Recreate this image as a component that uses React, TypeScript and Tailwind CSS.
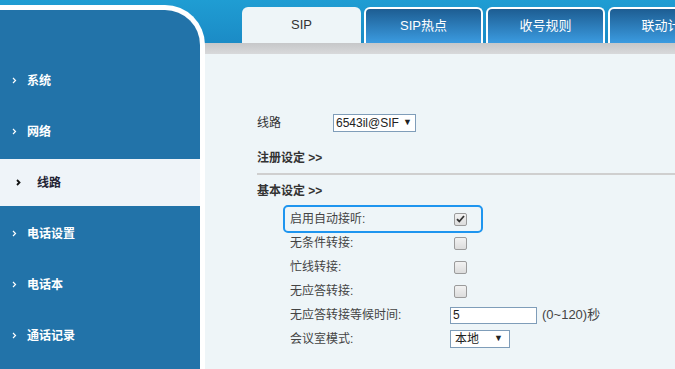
import React from "react";

const font = { fontFamily: '"Liberation Sans", "Noto Sans CJK SC", sans-serif' };

const menu = [
  { id: "system", label: "系统" },
  { id: "network", label: "网络" },
  { id: "line", label: "线路", active: true },
  { id: "phone", label: "电话设置" },
  { id: "book", label: "电话本" },
  { id: "log", label: "通话记录" },
];

const tabs = [
  { id: "sip", label: "SIP", active: true },
  { id: "hotspot", label: "SIP热点" },
  { id: "dial", label: "收号规则" },
  { id: "link", label: "联动计划" },
];

function Chevron({ active }: { active?: boolean }) {
  return (
    <svg width="5" height="7" viewBox="0 0 5 7" className="shrink-0">
      <polyline
        points="1,1 3.5,3.5 1,6"
        fill="none"
        stroke={active ? "#111" : "#fff"}
        strokeWidth={active ? 1.8 : 1.2}
      />
    </svg>
  );
}

function Checkbox({ checked }: { checked?: boolean }) {
  return (
    <div className="ml-[4px] flex h-[13px] w-[13px] items-center justify-center rounded-[2px] border border-[#9b9b9b] bg-[linear-gradient(to_bottom,#f2f2f2,#dcdcdc)]">
      {checked && (
        <svg width="9" height="8" viewBox="0 0 9 8">
          <path d="M1 4.2 L3.3 6.5 L8 1" fill="none" stroke="#333" strokeWidth="1.8" />
        </svg>
      )}
    </div>
  );
}

function Row({ label, children, boxed }: { label: string; children: React.ReactNode; boxed?: boolean }) {
  return (
    <div
      className={
        "flex h-[24px] items-center " +
        (boxed ? "w-[196px] rounded-[3px] outline-2 outline-[#1e95ef]" : "")
      }
    >
      <span className="w-[165px] pl-[5px] text-[12px] text-[#444]">{label}</span>
      {children}
    </div>
  );
}

export default function App() {
  return (
    <div
      style={font}
      className="flex h-[369px] w-[675px] overflow-hidden bg-[linear-gradient(to_bottom,#1f9dd3_0px,#1b8bc6_43px,#c6c7c9_43px,#d8d9db_54px,#eef5f8_54px)]"
    >
      {/* sidebar */}
      <div className="flex w-[205px] shrink-0 flex-col pt-[5px]">
        <div className="flex flex-1 flex-col gap-[4px] rounded-tr-[40px] border-t-[5px] border-r-[5px] border-white bg-[#2273a9] pt-[47px]">
          {menu.map((m) =>
            m.active ? (
              <div key={m.id} className="flex h-[47px] items-center bg-[#eff4f9] pl-[16px]">
                <Chevron active />
                <span className="ml-[16px] text-[12px] font-bold text-[#223]">{m.label}</span>
              </div>
            ) : (
              <div key={m.id} className="flex h-[47px] items-center pl-[12px]">
                <Chevron />
                <span className="ml-[10px] text-[12px] font-bold text-white">{m.label}</span>
              </div>
            )
          )}
        </div>
      </div>

      {/* main */}
      <div className="flex min-w-0 flex-1 flex-col">
        <div className="flex h-[43px] items-end gap-[3px] pl-[37px]">
          {tabs.map((t) => (
            <div
              key={t.id}
              className={
                "flex h-[36px] w-[119px] shrink-0 items-center justify-center overflow-hidden whitespace-nowrap rounded-t-[6px] text-[13px] " +
                (t.active
                  ? "bg-[#eef5f8] text-[#333]"
                  : "border-2 border-b-0 border-white bg-[linear-gradient(to_bottom,#1d5d92,#3b9be0)] text-white")
              }
            >
              {t.label}
            </div>
          ))}
        </div>
        <div className="h-[11px]" />

        <div className="flex flex-col pl-[52px]">
          <div className="mt-[60px] flex h-[18px] items-center">
            <span className="w-[76px] text-[12px] text-[#333]">线路</span>
            <div className="flex h-[18px] w-[83px] items-center gap-[4px] whitespace-nowrap border border-[#7f9db9] bg-white pl-[2px] text-[12px] text-[#222]">
              <span>6543il@SIF</span>
              <span className="shrink-0 text-[9px]">▼</span>
            </div>
          </div>

          <div className="mt-[18px] h-[16px] text-[12px] font-bold leading-[16px] text-[#333]">注册设定 &gt;&gt;</div>
          <div className="mt-[7px] h-[2px] bg-[#cfcfcf]" />
          <div className="mt-[8px] h-[16px] text-[12px] font-bold leading-[16px] text-[#333]">基本设定 &gt;&gt;</div>

          <div className="mt-[8px] flex flex-col pl-[28px]">
            <Row label="启用自动接听:" boxed>
              <Checkbox checked />
            </Row>
            <Row label="无条件转接:">
              <Checkbox />
            </Row>
            <Row label="忙线转接:">
              <Checkbox />
            </Row>
            <Row label="无应答转接:">
              <Checkbox />
            </Row>
            <Row label="无应答转接等候时间:">
              <div className="flex h-[17px] w-[87px] items-center border border-[#7f9db9] bg-white pl-[2px] text-[12px] text-[#222]">5</div>
              <span className="ml-[5px] text-[13px] text-[#444]">(0~120)秒</span>
            </Row>
            <Row label="会议室模式:">
              <div className="flex h-[18px] w-[60px] items-center justify-between border border-[#7f9db9] bg-white pl-[4px] pr-[6px] text-[12px] text-[#222]">
                <span>本地</span>
                <span className="text-[9px]">▼</span>
              </div>
            </Row>
          </div>
        </div>
      </div>
    </div>
  );
}
